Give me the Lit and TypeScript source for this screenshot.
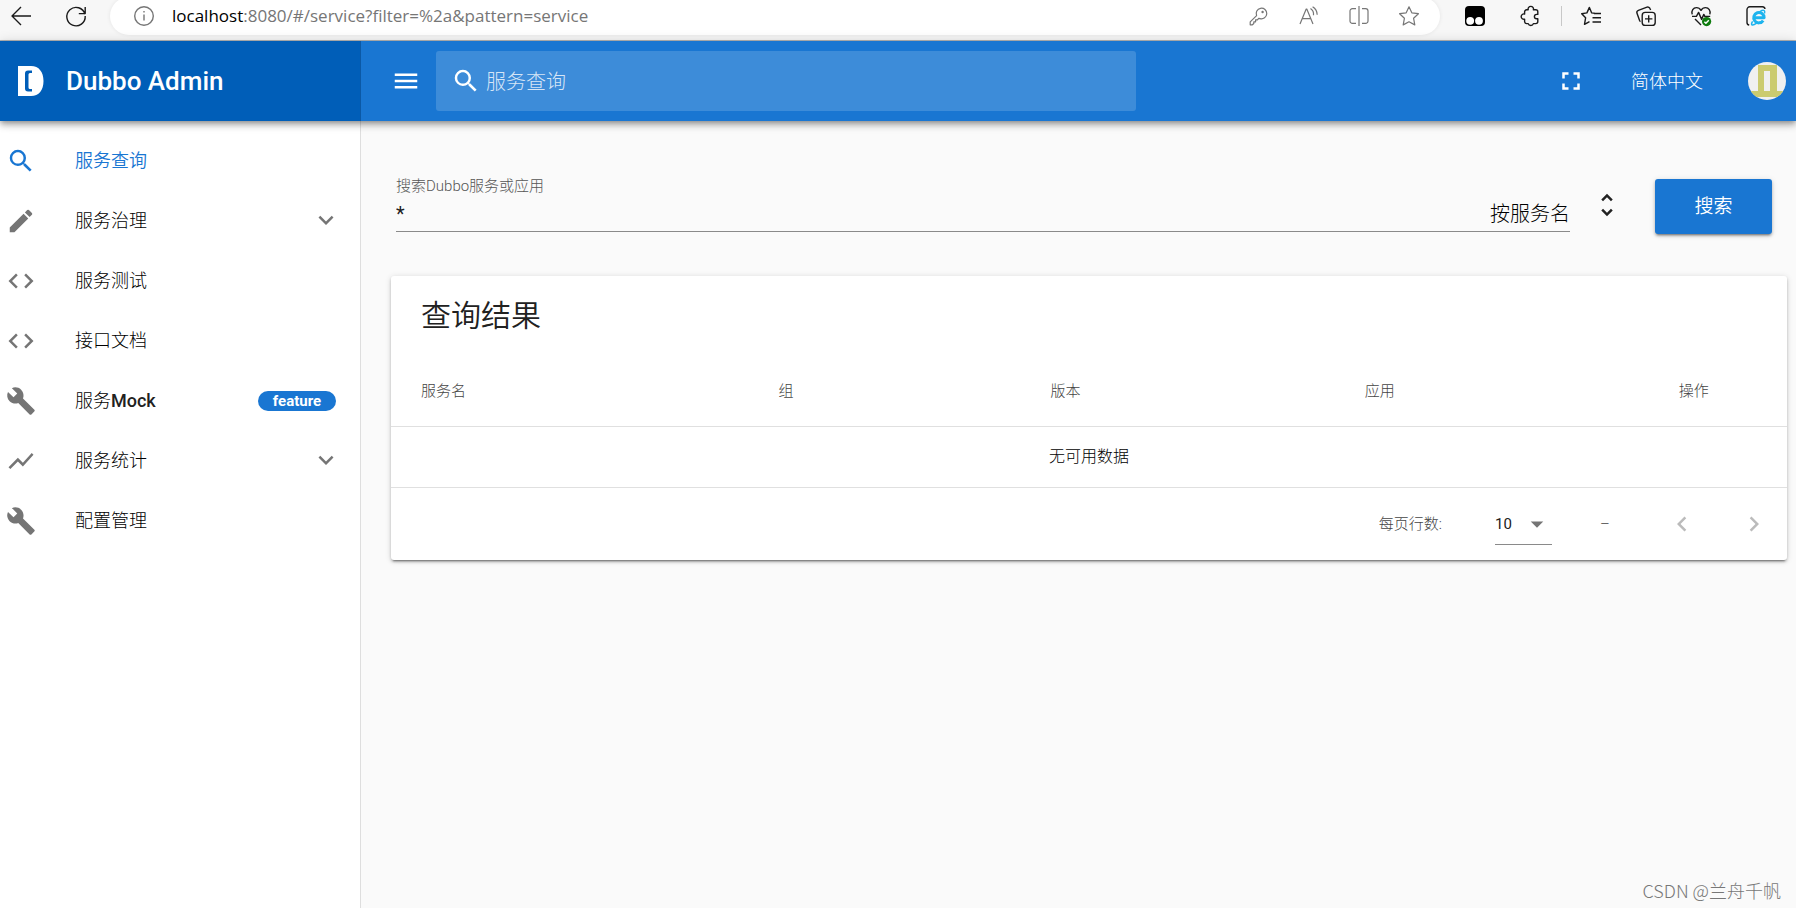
import { LitElement, html, css, svg, nothing } from "lit";
import { customElement, property } from "lit/decorators.js";
import { classMap } from "lit/directives/class-map.js";

const FONT = css`Roboto, "Noto Sans CJK SC", sans-serif`;

/* Material glyphs on a 24 unit grid */
const paths: Record<string, string> = {
  search:
    "M15.5 14h-.79l-.28-.27A6.471 6.471 0 0 0 16 9.5 6.5 6.5 0 1 0 9.5 16c1.61 0 3.09-.59 4.23-1.57l.27.28v.79l5 4.99L20.49 19l-4.99-5zm-6 0C7.01 14 5 11.99 5 9.5S7.01 5 9.5 5 14 7.01 14 9.5 11.99 14 9.5 14z",
  edit: "M3 17.25V21h3.75L17.81 9.94l-3.75-3.75L3 17.25zM20.71 7.04a.996.996 0 0 0 0-1.41l-2.34-2.34a.996.996 0 0 0-1.41 0l-1.83 1.83 3.75 3.75 1.83-1.83z",
  code: "M9.4 16.6L4.8 12l4.6-4.6L8 6l-6 6 6 6 1.4-1.4zm5.2 0l4.6-4.6-4.6-4.6L16 6l6 6-6 6-1.4-1.4z",
  build:
    "M22.7 19l-9.1-9.1c.9-2.3.4-5-1.5-6.9-2-2-5-2.4-7.4-1.3L9 6 6 9 1.6 4.7C.4 7.1.9 10.1 2.9 12.1c1.9 1.9 4.6 2.4 6.9 1.5l9.1 9.1c.4.4 1 .4 1.4 0l2.3-2.3c.5-.4.5-1.1.1-1.4z",
  chart: "M3.5 18.49l6-6.01 4 4L22 6.92l-1.41-1.41-7.09 7.97-4-4L2 16.99z",
  down: "M7.41 7.84L12 12.42l4.59-4.58L18 9.25l-6 6-6-6z",
  menu: "M3 18h18v-2H3v2zm0-5h18v-2H3v2zm0-7v2h18V6H3z",
  fullscreen:
    "M7 14H5v5h5v-2H7v-3zm-2-4h2V7h3V5H5v5zm12 7h-3v2h5v-5h-2v3zM14 5v2h3v3h2V5h-5z",
  unfold:
    "M12 5.83L15.17 9l1.41-1.41L12 3 7.41 7.59 8.83 9 12 5.83zm0 12.34L8.83 15l-1.41 1.41L12 21l4.59-4.59L15.17 15 12 18.17z",
  left: "M15.41 7.41L14 6l-6 6 6 6 1.41-1.41L10.83 12z",
  right: "M10 6L8.59 7.41 13.17 12l-4.58 4.59L10 18l6-6z",
  dropdown: "M7 10l5 5 5-5z",
};

const icon = (name: string) => html`<svg class="icon" viewBox="0 0 24 24" aria-hidden="true">
  <path d=${paths[name]}></path>
</svg>`;

const shared = css`
  :host,
  *,
  *::before,
  *::after {
    box-sizing: border-box;
  }
  button,
  input,
  select {
    font: inherit;
    color: inherit;
    background: none;
    border: 0;
    padding: 0;
    margin: 0;
    outline: 0;
  }
  button,
  select {
    cursor: pointer;
  }
  a {
    color: inherit;
    text-decoration: none;
  }
  .icon {
    display: block;
    flex: none;
    width: 30px;
    height: 30px;
    fill: currentColor;
  }
`;

/* Browser toolbar glyphs on a 20 unit grid */
const chromeIcons = {
  back: svg`<path d="M20 10H1M10 1L1 10l9 9"></path>`,
  reload: svg`<path d="M18.9 8.2A9.2 9.2 0 1 0 19.2 10M19.2 1v6.6h-6.4"></path>`,
  info: svg`<circle cx="10" cy="10" r="9.3"></circle><path d="M10 8.6v6M10 5v1.6"></path>`,
  key: svg`<path d="M7.6 9.6A5.3 5.3 0 1 1 11 12.6l-1.3-.3-1.3 1.5H6.6v2H4.8v1.7L3.4 18.8H1.2v-2.9z"></path><circle cx="13.6" cy="6" r=".6"></circle>`,
  aloud: svg`<path d="M1 18L7.2 3h.6L14 18M3.2 12.6h8.4M11.5 2.6a7 7 0 0 1 3 6.6M13.6.8a9.6 9.6 0 0 1 4.6 8"></path>`,
  split: svg`<path d="M10 0v20M7 2.6H3.4A2.4 2.4 0 0 0 1 5v10a2.4 2.4 0 0 0 2.4 2.4H7M13 2.6h3.6A2.4 2.4 0 0 1 19 5v10a2.4 2.4 0 0 1-2.4 2.4H13"></path>`,
  star: svg`<path d="M10 .8l2.800 6 6.600.9-4.800 4.600 1.200 6.600L10 15.800l-5.800 3.100 1.200-6.600L.6 7.700l6.600-.9z"></path>`,
  monkey: svg`<rect class="solid" x="0" y="0" width="20" height="20" rx="4"></rect><circle class="hole" cx="5.2" cy="14.8" r="3.900"></circle><circle class="hole" cx="14" cy="14.8" r="3.900"></circle>`,
  puzzle: svg`<path d="M4.600 5.800a2 2 0 0 1 2-2h1.600a2.700 2.700 0 1 1 5.200 0h2.400a2 2 0 0 1 2 2v2.600h-1.200a2.200 2.200 0 0 0 0 4.400h1.200v2.800a2 2 0 0 1-2 2h-2.400a2.700 2.700 0 0 1-5.200 0H6.600a2 2 0 0 1-2-2v-2.400a2.700 2.700 0 1 1 0-5.200z"></path>`,
  favorites: svg`<path d="M13.6 7.200l-2.900-.3L8.400 1.400 5.900 6.900l-5.200.8 3.900 4.100-1.100 6.600 5-2.800M13 7.500h7M11.500 11.800H20M11.500 16H20"></path>`,
  collections: svg`<rect x="6.2" y="6.4" width="13" height="13" rx="3"></rect><path d="M12.7 9.2v7.4M9 12.9h7.4M14.6 4l-.5-1.3A2.4 2.4 0 0 0 11 1.2L2.4 4.3A2.4 2.4 0 0 0 1 7.3l2.6 7.2a2.4 2.4 0 0 0 .9 1.1"></path>`,
  health: svg`<path d="M1.200 8.400C0 4.600 2.400 1.600 5.400 1.600c2 0 3.600 1 4.600 2.700 1-1.700 2.600-2.700 4.600-2.700 3 0 5.400 3 4.200 6.800M1 10.400h4.400l2.200-4 3 7 2.200-5 1 2h5.400M4 13l6 6"></path><circle class="ok" cx="15.6" cy="15.6" r="4.600"></circle><path class="tick" d="M13.400 15.700l1.500 1.500 2.900-3"></path>`,
  ie: svg`<path d="M3.200 19A2.600 2.600 0 0 1 1 16.400V3.600A2.800 2.800 0 0 1 3.800.8h12.600A2.600 2.600 0 0 1 19 3"></path><path class="blue" d="M17.200 14.600a5.200 5.200 0 1 1 .9-2.900H8.600"></path><path class="orbit" d="M6.600 15.400c-2.600 4.200 0 4.600 4 1.800M14 5.600c3-2 5.600-1.800 4.400 1.800"></path>`,
};

const chromeIcon = (name: keyof typeof chromeIcons) =>
  html`<svg class="glyph" viewBox="0 0 20 20" aria-hidden="true">${chromeIcons[name]}</svg>`;

@customElement("browser-bar")
class BrowserBar extends LitElement {
  static styles = [
    shared,
    css`
      :host {
        display: block;
        overflow: hidden;
        background: #f7f7f7;
        border-bottom: 1px solid #b5b5b5;
        padding: 0 30px 8px 11px;
      }
      .row {
        display: flex;
        align-items: center;
        height: 32px;
      }
      .glyph {
        display: block;
        width: 20px;
        height: 20px;
        overflow: visible;
        fill: none;
        stroke: currentColor;
        stroke-width: 1.4;
        stroke-linejoin: round;
      }
      .nav,
      .tools {
        display: flex;
        align-items: center;
        gap: 35px;
        color: #1b1b1b;
      }
      .address {
        flex: 1;
        display: flex;
        align-items: center;
        height: 38px;
        margin: 0 25px 0 24px;
        padding: 0 21px 0 24px;
        border-radius: 19px;
        background: #fff;
        box-shadow: 0 0 4px rgba(0, 0, 0, 0.08);
        color: #767676;
      }
      .url {
        flex: 1;
        margin-left: 18px;
        font: 17px/24px "Open Sans", sans-serif;
      }
      .host {
        color: #000;
      }
      .actions {
        display: flex;
        gap: 30px;
      }
      .actions .glyph {
        stroke-width: 1.2;
      }
      .rule {
        width: 1px;
        height: 20px;
        margin: 0 19px 0 21px;
        background: #c8c8c8;
      }
      .solid {
        fill: #000;
        stroke: none;
      }
      .hole {
        fill: #fff;
        stroke: none;
      }
      .ok {
        fill: #107c10;
        stroke: none;
      }
      .tick {
        stroke: #fff;
      }
      .blue {
        stroke: #1eb4ee;
        stroke-width: 3;
      }
      .orbit {
        stroke: #1eb4ee;
        stroke-width: 1.5;
      }
    `,
  ];

  button(name: keyof typeof chromeIcons, label: string) {
    return html`<button type="button" aria-label=${label}>${chromeIcon(name)}</button>`;
  }

  render() {
    return html`<div class="row">
      <div class="nav">${this.button("back", "返回")}${this.button("reload", "刷新")}</div>
      <div class="address">
        ${this.button("info", "站点信息")}
        <span class="url"
          ><span class="host">localhost</span>:8080/#/service?filter=%2a&amp;pattern=service</span
        >
        <div class="actions">
          ${this.button("key", "密码")}${this.button("aloud", "大声朗读")}${this.button("split", "分屏")}${this.button("star", "收藏")}
        </div>
      </div>
      <div class="tools">${this.button("monkey", "脚本")}${this.button("puzzle", "扩展")}</div>
      <div class="rule"></div>
      <div class="tools">
        ${this.button("favorites", "收藏夹")}${this.button("collections", "集锦")}${this.button("health", "性能")}${this.button("ie", "IE 模式")}
      </div>
    </div>`;
  }
}

@customElement("app-header")
class AppHeader extends LitElement {
  static styles = [
    shared,
    css`
      :host {
        display: flex;
        position: relative;
        z-index: 2;
        height: 80px;
        background: #1976d2;
        color: #fff;
        font-family: ${FONT};
        box-shadow: 0 2px 5px -1px rgba(0, 0, 0, 0.3), 0 5px 6px rgba(0, 0, 0, 0.16),
          0 1px 12px rgba(0, 0, 0, 0.14);
      }
      .brand {
        display: flex;
        align-items: center;
        flex: none;
        width: 361px;
        padding-left: 17px;
        gap: 22px;
        background: #005eb8;
        border-right: 1px solid #0b59a6;
        font-size: 26px;
        font-weight: 500;
        line-height: 32px;
      }
      .logo {
        width: 27px;
        height: 30px;
      }
      .bar {
        flex: 1;
        display: flex;
        align-items: center;
        padding: 0 10px 0 30px;
      }
      .find {
        flex: 0 1 700px;
        display: flex;
        align-items: center;
        gap: 5px;
        height: 60px;
        margin-left: 15px;
        padding: 0 15px;
        border-radius: 3px;
        background: rgba(255, 255, 255, 0.16);
        font-size: 20px;
        font-weight: 300;
      }
      .find input {
        flex: 1;
        min-width: 0;
        height: 32px;
        padding-top: 2px;
      }
      .find input::placeholder {
        color: rgba(255, 255, 255, 0.8);
      }
      .end {
        display: flex;
        align-items: center;
        margin-left: auto;
        gap: 45px;
        font-size: 18px;
        font-weight: 300;
      }
      .end button {
        padding-bottom: 2px;
      }
      .end .icon,
      .end .avatar {
        margin-top: 2px;
      }
      .avatar {
        display: block;
        width: 38px;
        height: 38px;
      }
    `,
  ];

  render() {
    return html`
      <a class="brand" href="#/">
        <svg class="logo" viewBox="0 0 27 30" aria-hidden="true">
          <path
            fill="#fff"
            fill-rule="evenodd"
            d="M1 0h13c8 0 12.5 6 12.5 15S22 30 14 30H1zM15 4.500h-4q-3 0-3 3v15q0 3 3 3h4v-2.500h-2q-1.500 0-1.500-1.500v-13q0-1.500 1.500-1.500h2z"
          ></path>
        </svg>
        Dubbo Admin
      </a>
      <div class="bar">
        <button type="button" aria-label="菜单">${icon("menu")}</button>
        <label class="find">
          ${icon("search")}
          <input type="text" placeholder="服务查询" aria-label="服务查询" />
        </label>
        <div class="end">
          <button type="button" aria-label="全屏">${icon("fullscreen")}</button>
          <button type="button">简体中文</button>
          <button type="button" aria-label="用户">
            <svg class="avatar" viewBox="0 0 38 38" aria-hidden="true">
              <clipPath id="round"><circle cx="19" cy="19" r="19"></circle></clipPath>
              <g clip-path="url(#round)">
                <path fill="#f0f0f0" d="M0 0h38v38H0z"></path>
                <path fill="#cbcb6f" d="M10 3h19v26h9v6H0v-6h10zM16 9v20h6V9z" fill-rule="evenodd"></path>
              </g>
            </svg>
          </button>
        </div>
      </div>
    `;
  }
}

interface Entry {
  icon: string;
  text: string;
  latin?: string;
  group?: boolean;
  badge?: string;
  active?: boolean;
}

@customElement("side-nav")
class SideNav extends LitElement {
  @property({ attribute: false }) entries: Entry[] = [
    { icon: "search", text: "服务查询", active: true },
    { icon: "edit", text: "服务治理", group: true },
    { icon: "code", text: "服务测试" },
    { icon: "code", text: "接口文档" },
    { icon: "build", text: "服务", latin: "Mock", badge: "feature" },
    { icon: "chart", text: "服务统计", group: true },
    { icon: "build", text: "配置管理" },
  ];

  static styles = [
    shared,
    css`
      :host {
        display: block;
        flex: none;
        width: 361px;
        padding: 10px 0;
        background: #fff;
        border-right: 1px solid #dedede;
        font: 300 18px/24px ${FONT};
        color: #000;
      }
      .item {
        display: flex;
        align-items: center;
        height: 60px;
        padding: 0 19px 0 6px;
      }
      .item > .icon {
        color: #757575;
      }
      .text {
        flex: 1;
        margin-left: 39px;
      }
      .latin {
        font-weight: 500;
        color: #212121;
      }
      .active .text {
        font-weight: 350;
      }
      .active,
      .active > .icon {
        color: #1976d2;
      }
      .badge {
        width: 78px;
        margin-right: 5px;
        border-radius: 10px;
        background: #1976d2;
        color: #fff;
        font-size: 15px;
        font-weight: 700;
        line-height: 20px;
        text-align: center;
      }
    `,
  ];

  render() {
    return html`<nav>
      ${this.entries.map(
        (e) => html`<a class=${classMap({ item: true, active: !!e.active })} href="#/">
          ${icon(e.icon)}
          <span class="text">${e.text}${e.latin ? html`<span class="latin">${e.latin}</span>` : nothing}</span>
          ${e.badge ? html`<span class="badge">${e.badge}</span>` : nothing}
          ${e.group ? icon("down") : nothing}
        </a>`
      )}
    </nav>`;
  }
}

@customElement("service-search")
class ServiceSearch extends LitElement {
  static styles = [
    shared,
    css`
      :host {
        display: block;
        flex: 1;
        min-width: 0;
        padding: 55px 9px 55px 30px;
        font-family: ${FONT};
        font-weight: 300;
        color: #000;
      }
      .form {
        display: flex;
        align-items: center;
        height: 58px;
        padding: 0 15px 0 5px;
      }
      .field {
        flex: 1;
        align-self: flex-start;
        border-bottom: 1px solid #8a8a8a;
      }
      .label {
        display: block;
        font-size: 15px;
        line-height: 20px;
        color: #555;
      }
      .controls {
        display: flex;
        height: 35px;
        font-size: 20px;
      }
      .controls input {
        flex: 1;
        min-width: 0;
        font-weight: 400;
        color: #212121;
      }
      .controls select {
        appearance: none;
        text-align: right;
      }
      .form > .icon {
        margin: 0 33px 0 22px;
        color: #212121;
      }
      .submit {
        align-self: flex-end;
        width: 117px;
        height: 55px;
        padding-bottom: 5px;
        border-radius: 3px;
        background: #1976d2;
        color: #fff;
        font-size: 19px;
        font-weight: 350;
        box-shadow: 0 3px 2px -2px rgba(0, 0, 0, 0.3), 0 2px 3px rgba(0, 0, 0, 0.24),
          0 1px 6px rgba(0, 0, 0, 0.12);
      }
      .card {
        margin-top: 42px;
        border-radius: 3px;
        background: #fff;
        box-shadow: 0 3px 2px -2px rgba(0, 0, 0, 0.4), 0 2px 3px rgba(0, 0, 0, 0.2),
          0 1px 6px rgba(0, 0, 0, 0.14);
      }
      .title {
        margin: 0;
        padding: 20px 30px;
        font-size: 30px;
        font-weight: 350;
        line-height: 40px;
        color: #212121;
      }
      .table {
        width: 100%;
        table-layout: fixed;
        border-spacing: 0;
      }
      .table th {
        height: 71px;
        padding: 0 0 4px 30px;
        border-bottom: 1px solid #e0e0e0;
        font-size: 15px;
        font-weight: 300;
        text-align: left;
        color: #444;
      }
      .name {
        width: 25.6%;
      }
      .group {
        width: 19.5%;
      }
      .wide {
        width: 22.5%;
      }
      .empty {
        height: 60px;
        padding: 0 0 4px;
        font-size: 16px;
        text-align: center;
      }
      .pager {
        display: flex;
        align-items: center;
        justify-content: flex-end;
        height: 73px;
        padding-right: 18px;
        border-top: 1px solid #e0e0e0;
        font-size: 15px;
        color: #444;
      }
      .pager label {
        padding-bottom: 4px;
      }
      .size {
        display: grid;
        align-items: center;
        width: 57px;
        height: 41px;
        margin: 0 48px 0 53px;
        border-bottom: 1px solid #8a8a8a;
        font-weight: 400;
        color: #212121;
      }
      .size select {
        grid-area: 1 / 1;
        appearance: none;
        width: 100%;
        height: 40px;
      }
      .size .icon {
        grid-area: 1 / 1;
        justify-self: end;
        color: #757575;
        pointer-events: none;
      }
      .range {
        width: 8px;
        margin-right: 59px;
      }
      .pager button {
        color: #bbb;
      }
      .next {
        margin-left: 42px;
      }
    `,
  ];

  render() {
    return html`
      <form class="form" @submit=${(e: Event) => e.preventDefault()}>
        <div class="field">
          <label class="label" for="q">搜索Dubbo服务或应用</label>
          <div class="controls">
            <input id="q" type="text" .value=${"*"} />
            <select aria-label="查询方式">
              <option>按服务名</option>
            </select>
          </div>
        </div>
        ${icon("unfold")}
        <button class="submit" type="submit">搜索</button>
      </form>
      <section class="card">
        <h2 class="title">查询结果</h2>
        <table class="table">
          <thead>
            <tr>
              <th class="name">服务名</th>
              <th class="group">组</th>
              <th class="wide">版本</th>
              <th class="wide">应用</th>
              <th>操作</th>
            </tr>
          </thead>
          <tbody>
            <tr>
              <td class="empty" colspan="5">无可用数据</td>
            </tr>
          </tbody>
        </table>
        <div class="pager">
          <label for="size">每页行数:</label>
          <div class="size">
            <select id="size">
              <option>10</option>
            </select>
            ${icon("dropdown")}
          </div>
          <span class="range">–</span>
          <button type="button" aria-label="上一页" disabled>${icon("left")}</button>
          <button class="next" type="button" aria-label="下一页" disabled>${icon("right")}</button>
        </div>
      </section>
    `;
  }
}

@customElement("app-root")
class AppRoot extends LitElement {
  static styles = css`
    :host {
      display: flex;
      flex-direction: column;
      position: relative;
      min-height: 100vh;
      background: #fafafa;
    }
    .body {
      flex: 1;
      display: flex;
    }
    .mark {
      position: absolute;
      right: 15px;
      bottom: 6px;
      font: 300 18px/24px "Noto Sans CJK SC", sans-serif;
      color: #777;
    }
  `;

  render() {
    return html`
      <browser-bar></browser-bar>
      <app-header></app-header>
      <div class="body">
        <side-nav></side-nav>
        <service-search></service-search>
      </div>
      <div class="mark">CSDN @兰舟千帆</div>
    `;
  }
}
